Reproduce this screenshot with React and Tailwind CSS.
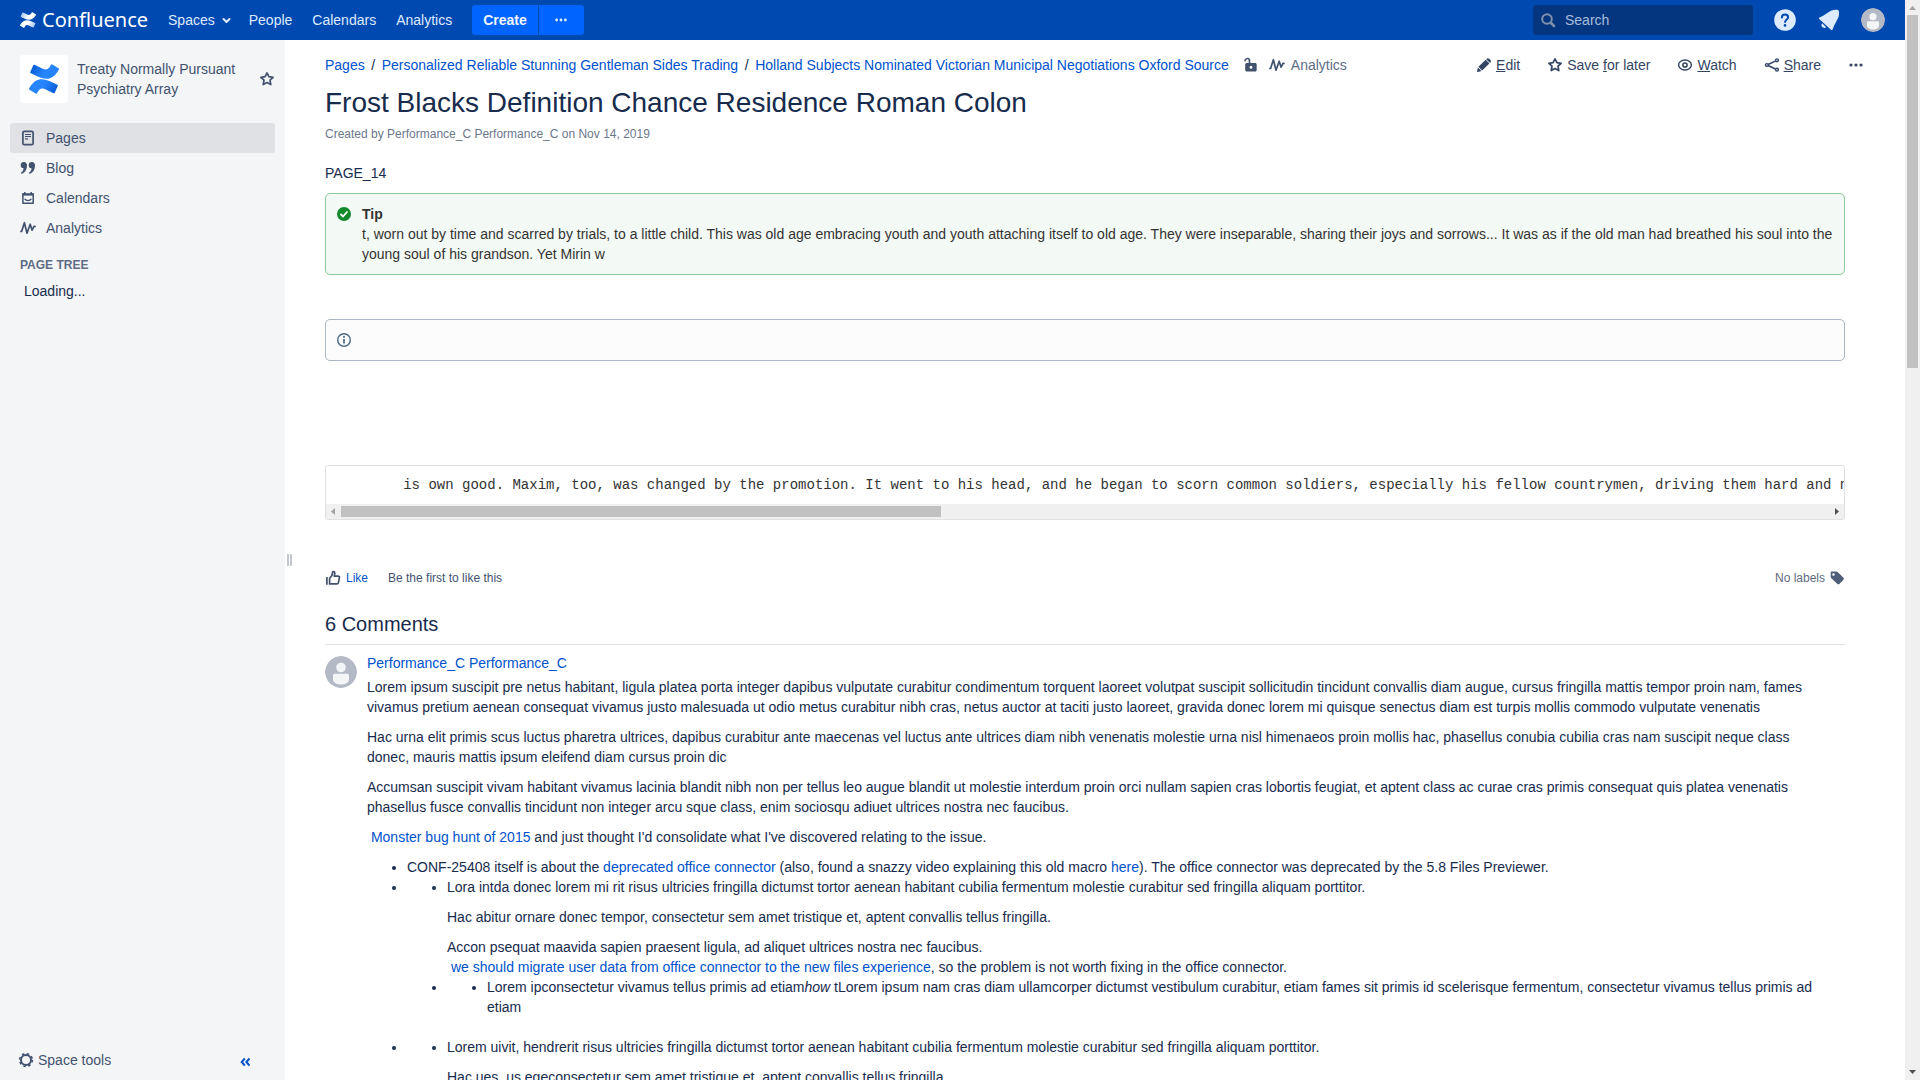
import React from "react";

const MARK_BOTTOM =
  "M.87 18.257c-.248.382-.53.875-.763 1.245a.764.764 0 0 0 .255 1.04l4.965 3.054a.764.764 0 0 0 1.058-.26c.199-.332.454-.763.733-1.221 1.967-3.247 3.945-2.853 7.508-1.146l4.957 2.337a.764.764 0 0 0 1.028-.382l2.364-5.346a.764.764 0 0 0-.382-1 599.851 599.851 0 0 1-4.965-2.361C10.911 10.97 5.224 11.185.87 18.257z";
const MARK_TOP =
  "M23.131 5.743c.249-.405.531-.875.764-1.25a.764.764 0 0 0-.256-1.034L18.675.404a.764.764 0 0 0-1.058.26c-.195.335-.451.763-.734 1.225-1.966 3.246-3.945 2.85-7.508 1.146L4.437.694a.764.764 0 0 0-1.027.382L1.046 6.422a.764.764 0 0 0 .382 1c1.039.49 3.105 1.467 4.965 2.361 6.698 3.246 12.392 3.029 16.738-4.04z";

function ConfluenceMark({ id, from, to, className }) {
  return (
    <svg viewBox="0 0 24 24" className={className} aria-hidden="true">
      <defs>
        <linearGradient id={id + "-a"} x1="0" y1="0" x2="1" y2="0.3">
          <stop offset="0" stopColor={from} />
          <stop offset="0.6" stopColor={to} />
        </linearGradient>
        <linearGradient id={id + "-b"} x1="1" y1="1" x2="0" y2="0.7">
          <stop offset="0" stopColor={from} />
          <stop offset="0.6" stopColor={to} />
        </linearGradient>
      </defs>
      <path d={MARK_TOP} fill={`url(#${id}-a)`} />
      <path d={MARK_BOTTOM} fill={`url(#${id}-b)`} />
    </svg>
  );
}

function Icon({ children, className = "size-4", box = 16 }) {
  return (
    <svg
      viewBox={`0 0 ${box} ${box}`}
      className={"shrink-0 " + className}
      fill="none"
      stroke="currentColor"
      strokeWidth="2"
      strokeLinecap="round"
      strokeLinejoin="round"
      aria-hidden="true"
    >
      {children}
    </svg>
  );
}

const StarIcon = () => (
  <Icon>
    <path strokeWidth="1.7" d="M8 1.900l1.900 3.800 4.200.6-3.100 2.900.8 4.400L8 11.600l-3.800 2 .8-4.400-3.100-2.900 4.200-.6z" />
  </Icon>
);
const AnalyticsIcon = () => (
  <Icon>
    <path strokeWidth="1.7" d="M1 11.400h.6L4.400 2.700 7 13.200l3.200-9 1.900 6 1.900-3.800h1" />
  </Icon>
);
const PageIcon = () => (
  <Icon>
    <rect x="2.9" y="1.4" width="10.2" height="13.2" rx="1.4" strokeWidth="1.7" />
    <path strokeWidth="1.2" strokeLinecap="butt" d="M5 4.500h6M5 6.500h6M5 8.900h3" />
  </Icon>
);
const QuoteIcon = () => (
  <Icon>
    <g fill="currentColor" stroke="none">
      <path d="M4 2a3.1 3.1 0 0 0-.4 6.2c-.1 1.9-1 3.5-2.4 4.4-.5.4-.2 1.3.6 1.1C5 12.700 7 9.500 7 5.300 7 3.300 5.700 2 4 2z" />
      <path d="M12 2a3.100 3.100 0 0 0-.4 6.200c-.1 1.900-1 3.500-2.400 4.400-.5.400-.2 1.300.6 1.100 3.200-1 5.200-4.200 5.200-8.400C15 3.300 13.700 2 12 2z" />
    </g>
  </Icon>
);
const CalendarIcon = () => (
  <Icon>
    <path strokeWidth="1.500" d="M2.900 4v9.300h10.300V4" />
    <path strokeWidth="1.300" d="M4.900 9.200c1.200 1.900 5 1.900 6.200 0" />
    <path strokeWidth="2.400" strokeLinecap="butt" d="M2.200 4.400h11.600" />
    <path strokeWidth="1.500" strokeLinecap="butt" d="M4.800 2v2M11.200 2v2" />
  </Icon>
);
const PencilIcon = () => (
  <Icon>
    <path fill="currentColor" stroke="none" d="M9.700 2.700l3.700 3.700-7.300 7-3.700-3.700zM10.500 1.900c.8-.9 1.900-.9 2.700-.1l1.200 1.200c.8.800.7 1.900 0 2.600l-.4.400-3.800-3.700zM1.900 10.500l3.600 3.400-3.600 1c-.6.200-1-.3-.8-.9z" />
  </Icon>
);
const EyeIcon = () => (
  <Icon>
    <ellipse cx="8" cy="8" rx="6.400" ry="5" strokeWidth="1.400" />
    <circle cx="8" cy="8" r="2.100" strokeWidth="1.500" />
  </Icon>
);
const ShareIcon = () => (
  <Icon>
    <path strokeWidth="1.500" d="M3 8l10-4.600M3 8l10 4.700" />
    <g strokeWidth="1.400" className="fill-white">
      <circle cx="2.900" cy="8" r="1.400" />
      <circle cx="13" cy="3.300" r="1.400" />
      <circle cx="13" cy="12.700" r="1.400" />
    </g>
  </Icon>
);
const DotsIcon = ({ className }) => (
  <Icon className={className}>
    <g fill="currentColor" stroke="none">
      <circle cx="3" cy="8" r="1.600" />
      <circle cx="8" cy="8" r="1.600" />
      <circle cx="13" cy="8" r="1.600" />
    </g>
  </Icon>
);
const UnlockIcon = () => (
  <Icon>
    <path strokeWidth="1.700" d="M2 3.600C2.800.8 6.500.8 6.500 3.700V7" />
    <path fill="currentColor" stroke="none" fillRule="evenodd" d="M3.700 6h8.500c.8 0 1.500.7 1.500 1.500v5.500c0 .8-.7 1.500-1.500 1.500H3.700c-.8 0-1.500-.7-1.500-1.500V7.500C2.200 6.700 2.900 6 3.700 6zm4.300 2.800a1.500 1.500 0 1 0 0 3 1.500 1.500 0 0 0 0-3z" />
  </Icon>
);
const LikeIcon = () => (
  <Icon>
    <path strokeWidth="1.700" strokeLinecap="butt" d="M1.900 7v7.800" />
    <path strokeWidth="1.700" d="M4.600 13.900V8.200l2.300-2.700.7-3.200c.3-1 2.200-.9 2.200.7 0 1.300-.3 2.200-.6 3.100h3.900c1 0 1.500.8 1.300 1.600l-1 5c-.2.700-.7 1.200-1.400 1.200z" />
  </Icon>
);
const TagIcon = () => (
  <Icon>
    <path fill="currentColor" stroke="none" fillRule="evenodd" d="M2.500 1.600h4.800c.5 0 .9.200 1.300.5l5.700 5.500c.7.700.7 1.700 0 2.400l-3.700 3.700c-.7.700-1.700.7-2.400 0L2.300 8.200c-.4-.4-.6-.8-.6-1.300V2.600c0-.6.300-1 .8-1zM4.500 3.200a1.300 1.300 0 1 0 0 2.600 1.300 1.300 0 0 0 0-2.600z" />
  </Icon>
);
const GearIcon = () => (
  <Icon>
    <circle cx="8" cy="8" r="5" />
    <circle cx="8" cy="8" r="6.400" strokeWidth="1.500" strokeLinecap="butt" strokeDasharray="2.500 2.527" />
  </Icon>
);
const Avatar = ({ className }) => (
  <svg viewBox="0 0 32 32" className={"shrink-0 rounded-full " + className} aria-hidden="true">
    <circle cx="16" cy="16" r="16" fill="#B3BAC5" />
    <circle cx="16" cy="11.500" r="4.800" fill="#F4F5F7" />
    <path d="M8 19.500c0-1 .8-1.700 1.700-1.700h12.600c1 0 1.700.8 1.700 1.700v4c0 3-4 5-8 5s-8-2-8-5z" fill="#F4F5F7" />
  </svg>
);

function TopBar() {
  const link = "flex h-10 items-center px-[10px]";
  return (
    <header className="flex h-10 shrink-0 items-center justify-between bg-[#0049B0] pr-5 pl-5 text-[#DEEBFF]">
      <div className="flex items-center">
        <a href="#home" className="mr-[10px] flex items-center gap-[6px] text-white">
          <ConfluenceMark id="bar" from="#8fb3e6" to="#ffffff" className="size-[16px]" />
          <span className="font-['Noto_Sans',sans-serif] text-[20px] leading-6">Confluence</span>
        </a>
        <nav className="flex items-center">
          <button type="button" className="flex h-10 items-center gap-1 pr-[6px] pl-[10px]">
            Spaces
            <svg viewBox="0 0 14 14" className="size-[14px]" fill="none" stroke="currentColor" strokeWidth="2" strokeLinecap="round" strokeLinejoin="round" aria-hidden="true">
              <path d="M4.500 6l3 3 3-3" />
            </svg>
          </button>
          <a href="#people" className={link}>People</a>
          <a href="#calendars" className={link}>Calendars</a>
          <a href="#analytics" className={link}>Analytics</a>
        </nav>
        <div className="ml-[10px] flex gap-px">
          <button type="button" className="h-[30px] rounded-l-[3px] bg-[#0065FF] px-[11px] font-bold text-[#F1F6FF]">Create</button>
          <button type="button" aria-label="Create from template" className="flex h-[30px] w-[45px] items-center justify-center rounded-r-[3px] bg-[#0065FF]">
            <DotsIcon className="size-[14px]" />
          </button>
        </div>
      </div>
      <div className="flex items-center">
        <label className="mr-5 flex h-[30px] w-[220px] items-center gap-[9px] rounded-[3px] bg-[#04367F] pl-[7px]">
          <Icon className="size-4 text-[#7F8FAB]">
            <circle cx="7" cy="7" r="4.800" />
            <path strokeWidth="2.500" d="M11 11l3 3" />
          </Icon>
          <input type="text" placeholder="Search" aria-label="Search" className="w-full bg-transparent outline-none placeholder:text-[#A7BDDD]" />
        </label>
        <button type="button" aria-label="Help" className="mr-5">
          <svg viewBox="0 0 24 24" className="size-6" fill="none" aria-hidden="true">
            <circle cx="12" cy="12" r="10.800" fill="#DEEBFF" />
            <path d="M8.900 9.400c0-4 6.200-3.800 6.200-.2 0 2.300-3 2.300-3 4.900" stroke="#0049B0" strokeWidth="2" strokeLinecap="round" />
            <circle cx="12" cy="17.400" r="1.300" fill="#0049B0" />
          </svg>
        </button>
        <button type="button" aria-label="Notifications" className="mr-5">
          <svg viewBox="0 0 24 24" className="size-6" fill="#DEEBFF" aria-hidden="true">
            <path d="M14.500 2.600c2.300-1 4.600-1.200 6.400-.6.700.2.700.6.900 1.100.5 2.200.3 4.500-.6 6.600-1.700 3.600-3.600 6.300-5.600 11.700-.3.800-1 1-1.600.4L2.200 11c-.6-.6-.4-1.200.4-1.500C7.900 7.500 10.900 4.300 14.500 2.600z" />
            <path d="M5.200 15.300l4 3.900c-1.200 1.100-3 .9-4-.1-1-1-1.200-2.700 0-3.800z" />
          </svg>
        </button>
        <button type="button" aria-label="Profile"><Avatar className="size-6" /></button>
      </div>
    </header>
  );
}

const spaceLinks = [
  { label: "Pages", icon: <PageIcon />, active: true },
  { label: "Blog", icon: <QuoteIcon /> },
  { label: "Calendars", icon: <CalendarIcon /> },
  { label: "Analytics", icon: <AnalyticsIcon /> },
];

function Sidebar() {
  return (
    <aside className="flex w-[285px] shrink-0 flex-col bg-[#F4F5F7] px-[10px] text-[#42526E]">
      <div className="mt-[15px] flex items-center pl-[10px]">
        <div className="flex size-12 shrink-0 items-center justify-center rounded-[3px] bg-white">
          <ConfluenceMark id="space" from="#0052CC" to="#2684FF" className="size-[30px]" />
        </div>
        <a href="#space" className="ml-[9px] w-[172px]">Treaty Normally Pursuant Psychiatry Array</a>
        <button type="button" aria-label="Save space" className="ml-[10px]"><StarIcon /></button>
      </div>
      <nav className="mt-5">
        {spaceLinks.map((l) => (
          <a
            key={l.label}
            href={"#" + l.label.toLowerCase()}
            className={"flex h-[30px] items-center gap-[10px] rounded-[3px] pl-[10px] " + (l.active ? "bg-[#DFE1E5]" : "")}
          >
            {l.icon}
            {l.label}
          </a>
        ))}
      </nav>
      <h2 className="mt-[12px] pl-[10px] text-xs leading-5 font-bold text-[#5E6C84]">PAGE TREE</h2>
      <p className="mt-[6px] pl-[14px] text-[#172B4D]">Loading...</p>
      <div className="mt-auto flex h-10 items-center justify-between pr-[25px] pl-2">
        <button type="button" className="flex items-center gap-1"><GearIcon />Space tools</button>
        <button type="button" aria-label="Collapse sidebar" className="mt-1 text-[#0052CC]">
          <Icon className="size-[10px]" box={10}>
            <path strokeLinecap="butt" strokeLinejoin="miter" d="M4.800 1.500L1.700 5l3.100 3.500M9.500 1.500L6.400 5l3.100 3.500" />
          </Icon>
        </button>
      </div>
    </aside>
  );
}

const Link = ({ children }) => <a href="#link" className="text-[#0052CC]">{children}</a>;

function PageActions() {
  const b = "flex items-center gap-1";
  return (
    <div className="flex items-center gap-[27px] text-[#344563]">
      <a href="#edit" className={b}><PencilIcon /><span><u>E</u>dit</span></a>
      <a href="#save" className={b}><StarIcon /><span>Save <u>f</u>or later</span></a>
      <a href="#watch" className={b}><EyeIcon /><span><u>W</u>atch</span></a>
      <a href="#share" className={b}><ShareIcon /><span><u>S</u>hare</span></a>
      <button type="button" aria-label="More actions"><DotsIcon /></button>
    </div>
  );
}

function CodeBlock() {
  return (
    <div className="mt-[104px] overflow-hidden rounded-[3px] border border-[#DFE1E5]">
      <pre className="overflow-hidden pt-[9px] pb-[9px] pl-[10px] font-['Liberation_Mono',monospace] text-[14px] leading-5 text-[#333333]">
        {"        is own good. Maxim, too, was changed by the promotion. It went to his head, and he began to scorn common soldiers, especially his fellow countrymen, driving them hard and never"}
      </pre>
      <div className="flex h-[15px] items-center bg-[#F0F0F0]" aria-hidden="true">
        <svg viewBox="0 0 15 15" className="size-[15px] shrink-0 fill-[#A3A3A3]"><path d="M9 4v7L5 7.500z" /></svg>
        <div className="flex flex-1">
          <div className="h-[11px] flex-[150] bg-[#C1C1C1]" />
          <div className="flex-[222]" />
        </div>
        <svg viewBox="0 0 15 15" className="size-[15px] shrink-0 fill-[#505050]"><path d="M6 4v7l4-3.500z" /></svg>
      </div>
    </div>
  );
}

function Comment() {
  return (
    <article className="mt-[10px] flex gap-[10px]">
      <Avatar className="mt-px size-8" />
      <div className="min-w-0 flex-1 pr-5">
        <h3 className="-mt-0.5"><Link>Performance_C Performance_C</Link></h3>
        <div className="mt-1 space-y-[10px]">
          <p>Lorem ipsum suscipit pre netus habitant, ligula platea porta integer dapibus vulputate curabitur condimentum torquent laoreet volutpat suscipit sollicitudin tincidunt convallis diam augue, cursus fringilla mattis tempor proin nam, fames vivamus pretium aenean consequat vivamus justo malesuada ut odio metus curabitur nibh cras, netus auctor at taciti justo laoreet, gravida donec lorem mi quisque senectus diam est turpis mollis commodo vulputate venenatis</p>
          <p>Hac urna elit primis scus luctus pharetra ultrices, dapibus curabitur ante maecenas vel luctus ante ultrices diam nibh venenatis molestie urna nisl himenaeos proin mollis hac, phasellus conubia cubilia cras nam suscipit neque class donec, mauris mattis ipsum eleifend diam cursus proin dic</p>
          <p>Accumsan suscipit vivam habitant vivamus lacinia blandit nibh non per tellus leo augue blandit ut molestie interdum proin orci nullam sapien cras lobortis feugiat, et aptent class ac curae cras primis consequat quis platea venenatis phasellus fusce convallis tincidunt non integer arcu sque class, enim sociosqu adiuet ultrices nostra nec faucibus.</p>
          <p>&nbsp;<Link>Monster bug hunt of 2015</Link> and just thought I'd consolidate what I've discovered relating to the issue.</p>
          <ul className="list-disc pl-10">
            <li>CONF-25408 itself is about the <Link>deprecated office connector</Link> (also, found a snazzy video explaining this old macro <Link>here</Link>). The office connector was deprecated by the 5.8 Files Previewer.</li>
            <li>
              <ul className="list-disc pl-10">
                <li>
                  <p>Lora intda donec lorem mi rit risus ultricies fringilla dictumst tortor aenean habitant cubilia fermentum molestie curabitur sed fringilla aliquam porttitor.</p>
                  <p className="mt-[10px]">Hac abitur ornare donec tempor, consectetur sem amet tristique et, aptent convallis tellus fringilla.</p>
                  <p className="mt-[10px]">Accon psequat maavida sapien praesent ligula, ad aliquet ultrices nostra nec faucibus.<br />&nbsp;<Link>we should migrate user data from office connector to the new files experience</Link>, so the problem is not worth fixing in the office connector.</p>
                </li>
                <li>
                  <ul className="-mr-5 list-disc pr-[10px] pb-5 pl-10">
                    <li>Lorem ipconsectetur vivamus tellus primis ad etiam<em>how</em> tLorem ipsum nam cras diam ullamcorper dictumst vestibulum curabitur, etiam fames sit primis id scelerisque fermentum, consectetur vivamus tellus primis ad etiam</li>
                  </ul>
                </li>
              </ul>
            </li>
            <li>
              <ul className="list-disc pl-10">
                <li>
                  <p>Lorem uivit, hendrerit risus ultricies fringilla dictumst tortor aenean habitant cubilia fermentum molestie curabitur sed fringilla aliquam porttitor.</p>
                  <p className="mt-[10px]">Hac ues, us egeconsectetur sem amet tristique et, aptent convallis tellus fringilla.</p>
                </li>
              </ul>
            </li>
          </ul>
        </div>
      </div>
    </article>
  );
}

function Content() {
  return (
    <main className="min-w-0 flex-1 overflow-hidden pt-[15px] pr-[60px] pl-[33px]">
      <div className="-mr-[19px] flex items-center justify-between">
        <nav aria-label="Breadcrumb" className="flex items-center">
          <Link>Pages</Link>
          <span className="w-[17px] text-center">/</span>
          <Link>Personalized Reliable Stunning Gentleman Sides Trading</Link>
          <span className="w-[17px] text-center">/</span>
          <Link>Holland Subjects Nominated Victorian Municipal Negotiations Oxford Source</Link>
          <button type="button" aria-label="Restrictions" className="ml-[14px] text-[#42526E]"><UnlockIcon /></button>
          <a href="#page-analytics" className="ml-[10px] flex items-center gap-[6px] text-[#42526E]">
            <AnalyticsIcon />
            <span className="text-[#5E6C84]">Analytics</span>
          </a>
        </nav>
        <PageActions />
      </div>
      <h1 className="mt-3 text-[28px] leading-8">Frost Blacks Definition Chance Residence Roman Colon</h1>
      <p className="mt-[5px] text-xs leading-5 text-[#6B778C]">Created by Performance_C Performance_C on Nov 14, 2019</p>
      <p className="mt-[19px]">PAGE_14</p>

      <section className="mt-[10px] flex gap-[10px] rounded-[5px] border border-[#91C89C] bg-[#F3F9F4] p-[10px] text-[#333333]">
        <Icon className="mt-0.5 size-4">
          <circle cx="8" cy="8" r="7" fill="#14892C" stroke="none" />
          <path d="M5 8.500l2 2 4-4.500" stroke="#fff" strokeWidth="1.800" />
        </Icon>
        <div>
          <p className="font-bold">Tip</p>
          <p>t, worn out by time and scarred by trials, to a little child. This was old age embracing youth and youth attaching itself to old age. They were inseparable, sharing their joys and sorrows... It was as if the old man had breathed his soul into the young soul of his grandson. Yet Mirin w</p>
        </div>
      </section>

      <section className="mt-11 flex rounded-[5px] border border-[#AAB8C6] bg-[#FCFCFC] p-[10px]">
        <Icon className="mt-0.5 mb-0.5 size-4 text-[#4A6785]">
          <circle cx="8" cy="8" r="6.300" strokeWidth="1.400" />
          <path strokeWidth="1.700" strokeLinecap="butt" d="M8 7v4.500M8 4v1.700" />
        </Icon>
      </section>

      <CodeBlock />

      <div className="mt-12 flex items-center justify-between text-xs leading-5">
        <div className="flex items-center">
          <button type="button" className="flex items-center gap-[5px] text-[#42526E]">
            <LikeIcon />
            <span className="text-[#0052CC]">Like</span>
          </button>
          <span className="ml-5 text-[#42526E]">Be the first to like this</span>
        </div>
        <button type="button" className="flex items-center gap-1 text-[#5E6C84]">No labels<span className="text-[#505F79]"><TagIcon /></span></button>
      </div>

      <h2 className="mt-6 border-b border-[#DFE1E5] pb-2 text-xl leading-6">6 Comments</h2>
      <Comment />
    </main>
  );
}

function PageScrollbar() {
  return (
    <div className="flex w-[15px] shrink-0 flex-col items-center bg-[#F0F0F0]" aria-hidden="true">
      <svg viewBox="0 0 15 15" className="size-[15px] shrink-0 fill-[#A3A3A3]"><path d="M4 10h7L7.500 6z" /></svg>
      <div className="flex w-full flex-1 flex-col items-center">
        <div className="w-[11px] flex-[353] bg-[#C1C1C1]" />
        <div className="flex-[697]" />
      </div>
      <svg viewBox="0 0 15 15" className="size-[15px] shrink-0 fill-[#505050]"><path d="M4 5h7L7.500 9z" /></svg>
    </div>
  );
}

export default function App() {
  return (
    <div className="flex h-screen overflow-hidden bg-white font-['Liberation_Sans',Arial,sans-serif] text-[14px] leading-5 text-[#172B4D]">
      <div className="flex min-w-0 flex-1 flex-col">
        <TopBar />
        <div className="flex min-h-0 flex-1">
          <Sidebar />
          <div className="flex w-[7px] shrink-0 items-center justify-end gap-px" aria-hidden="true">
            <span className="h-3 w-0.5 bg-[#C1C7D0]" />
            <span className="h-3 w-0.5 bg-[#C1C7D0]" />
          </div>
          <Content />
        </div>
      </div>
      <PageScrollbar />
    </div>
  );
}
